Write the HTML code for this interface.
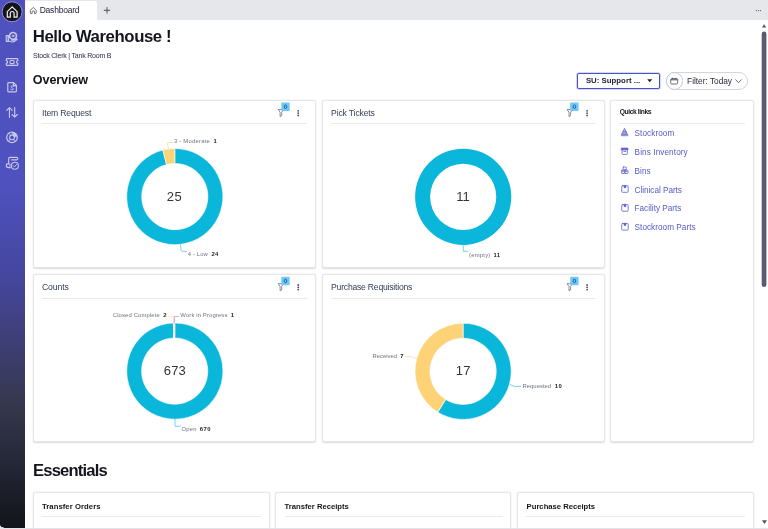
<!DOCTYPE html>
<html>
<head>
<meta charset="utf-8">
<title>Dashboard</title>
<style>
*{box-sizing:border-box;margin:0;padding:0}
html,body{width:768px;height:529px;overflow:hidden;background:#fff}
body{font-family:"Liberation Sans",sans-serif;color:#1c1c2b;position:relative;filter:blur(0.3px)}
.abs{position:absolute}
.t{position:absolute;white-space:nowrap;line-height:1}
#side{left:-4px;top:-4px;width:28.5px;height:531.6px;background:linear-gradient(180deg,#4e51be 0%,#4e51be 36.5%,#45469c 53.3%,#3e3f78 64.3%,#36384f 76.2%,#242735 88.1%,#12141b 100%)}
#tabs{left:24.5px;top:-4px;width:748px;height:23.8px;background:#e6e7ea}
#tab{left:25px;top:1px;width:72px;height:19px;background:#fff;border-radius:2px 2px 0 0}
#bottom{left:-4px;top:527.6px;width:776px;height:6px;background:#e3e4e8}
.card{position:absolute;background:#fff;border:1px solid #e4e6ea;border-radius:2.5px;box-shadow:0 0.5px 1.5px rgba(40,40,60,.16)}
.hr{position:absolute;height:1px;background:#e8eaee}
</style>
</head>
<body>
<div id="side" class="abs"></div>
<div id="tabs" class="abs"></div>
<div id="tab" class="abs"></div>

<!-- cards -->
<div class="card" style="left:33px;top:99.6px;width:283px;height:168.8px"></div>
<div class="card" style="left:321.5px;top:99.6px;width:283px;height:168.8px"></div>
<div class="card" style="left:33px;top:274px;width:283px;height:168.3px"></div>
<div class="card" style="left:321.5px;top:274px;width:283px;height:168.3px"></div>
<div class="card" style="left:610.3px;top:99.6px;width:143.5px;height:342px"></div>
<div class="card" style="left:33px;top:492px;width:236.5px;height:50px"></div>
<div class="card" style="left:275px;top:492px;width:236.4px;height:50px"></div>
<div class="card" style="left:517px;top:492px;width:236.7px;height:50px"></div>

<!-- dividers -->
<div class="hr" style="left:42px;top:123.2px;width:264.5px"></div>
<div class="hr" style="left:331px;top:123.2px;width:264.5px"></div>
<div class="hr" style="left:42px;top:297.7px;width:264.5px"></div>
<div class="hr" style="left:331px;top:297.7px;width:264.5px"></div>
<div class="hr" style="left:619.3px;top:122.8px;width:125.5px"></div>
<div class="hr" style="left:42px;top:515.6px;width:218.5px"></div>
<div class="hr" style="left:284.5px;top:515.6px;width:218px"></div>
<div class="hr" style="left:526.3px;top:515.6px;width:218.5px"></div>

<!-- select + filter pill -->
<div class="abs" style="left:577px;top:72.6px;width:83.3px;height:16.4px;border:1.25px solid #4653cb;border-radius:2px;background:#fff;box-shadow:0 0 0 0.8px rgba(80,92,210,.32)"></div>
<div class="abs" style="left:665.8px;top:72.1px;width:81.8px;height:17.6px;border:0.8px solid #d3d6df;border-radius:9px;background:#fff"></div>
<div class="abs" style="left:665.8px;top:72.1px;width:17.6px;height:17.6px;border:0.8px solid #c2c6d8;border-radius:9px;background:#fff"></div>

<svg class="abs" style="left:0;top:0" width="768" height="529" viewBox="0 0 768 529">
<path fill="#0bb6db" stroke="#fff" stroke-width="0.6" stroke-linejoin="round" d="M174.80,148.50A48.1,48.1 0 1,1 162.84,150.01L166.57,164.54A33.1,33.1 0 1,0 174.80,163.50Z"/>
<path fill="#fed377" stroke="#fff" stroke-width="0.6" stroke-linejoin="round" d="M162.84,150.01A48.1,48.1 0 0,1 174.80,148.50L174.80,163.50A33.1,33.1 0 0,0 166.57,164.54Z"/>
<path d="M168.8,149.3L167.3,143.6Q167.1,142.5 168.2,142.5L172.9,142.5" fill="none" stroke="#fddf9f" stroke-width="0.85" stroke-linejoin="round"/>
<path d="M180.4,244.4L181.2,250.4Q181.3,251.3 182.2,251.3L186.8,251.3" fill="none" stroke="#5fcbe6" stroke-width="0.85" stroke-linejoin="round"/>
<path fill="#0bb6db" fill-rule="evenodd" d="M415.09999999999997,196.8a48.1,48.1 0 1,0 96.2,0a48.1,48.1 0 1,0 -96.2,0ZM430.09999999999997,196.8a33.1,33.1 0 1,0 66.2,0a33.1,33.1 0 1,0 -66.2,0Z"/>
<path d="M463.3,244.6L463.3,251.3L468.4,251.3" fill="none" stroke="#5fcbe6" stroke-width="0.85" stroke-linejoin="round"/>
<path fill="#0bb6db" stroke="#fff" stroke-width="0.6" stroke-linejoin="round" d="M174.80,323.00A48.1,48.1 0 1,1 173.45,323.02L173.87,338.01A33.1,33.1 0 1,0 174.80,338.00Z"/>
<path fill="#fed377" stroke="#fff" stroke-width="0.6" stroke-linejoin="round" d="M173.45,323.02A48.1,48.1 0 0,1 174.35,323.00L174.49,338.00A33.1,33.1 0 0,0 173.87,338.01Z"/>
<path fill="#d78bd2" stroke="#fff" stroke-width="0.6" stroke-linejoin="round" d="M174.35,323.00A48.1,48.1 0 0,1 174.80,323.00L174.80,338.00A33.1,33.1 0 0,0 174.49,338.00Z"/>
<rect x="173.25" y="322.5" width="1.35" height="16.5" fill="#fff"/>
<path d="M173.6,323.6L173.6,316.8L168,316.8" fill="none" stroke="#fde2ae" stroke-width="0.85" stroke-linejoin="round"/>
<path d="M174.4,323.6L174.4,316.5L179.2,316.5" fill="none" stroke="#d995d6" stroke-width="0.85" stroke-linejoin="round"/>
<path d="M175,419L175,426.2L180.8,426.2" fill="none" stroke="#5fcbe6" stroke-width="0.85" stroke-linejoin="round"/>
<path fill="#0bb6db" stroke="#fff" stroke-width="0.6" stroke-linejoin="round" d="M463.10,323.20A48.1,48.1 0 1,1 437.78,412.20L445.68,399.44A33.1,33.1 0 1,0 463.10,338.20Z"/>
<path fill="#fed377" stroke="#fff" stroke-width="0.6" stroke-linejoin="round" d="M437.78,412.20A48.1,48.1 0 0,1 463.10,323.20L463.10,338.20A33.1,33.1 0 0,0 445.68,399.44Z"/>
<path d="M417.2,358.6L410.3,356.4L405.1,356.4" fill="none" stroke="#fde2ae" stroke-width="0.85" stroke-linejoin="round"/>
<path d="M509.9,384.5L514.5,386.4L521,386.4" fill="none" stroke="#5fcbe6" stroke-width="0.85" stroke-linejoin="round"/>
<!-- sidebar: home -->
<circle cx="12.1" cy="11.8" r="10" fill="#14141d" stroke="#9c9cd2" stroke-width="0.9"/>
<path d="M7.3,11.6L12.2,6.9L17.1,11.6V17.2H14.1V13.4a1.9,1.9 0 0 0 -3.8,0V17.2H7.3Z" fill="none" stroke="#f1f1f6" stroke-width="1.2" stroke-linejoin="round"/>
<g fill="none" stroke="#c6c7eb" stroke-width="1.05" stroke-linecap="round" stroke-linejoin="round">
<!-- hand + gear -->
<rect x="6.2" y="35.6" width="2.4" height="5.8" rx="0.4" fill="#c6c7eb" fill-opacity="0.45"/>
<circle cx="13" cy="35.9" r="3.45" stroke-dasharray="1.75 0.5" stroke-width="1.6"/>
<circle cx="13" cy="35.9" r="0.9" stroke-width="0.9"/>
<path d="M8.8,41.2L12.2,42Q14.6,42.1 17.2,39.4Q16.4,38.4 15.2,39.2L13.6,40.2H11.6" stroke-width="1.1"/>
<!-- ticket -->
<path d="M7,58.6H17.1Q17.8,58.6 17.8,59.3V60.6Q16.5,61 16.5,62Q16.5,63 17.8,63.4V64.7Q17.8,65.4 17.1,65.4H7Q6.3,65.4 6.3,64.7V63.4Q7.6,63 7.6,62Q7.6,61 6.3,60.6V59.3Q6.3,58.6 7,58.6Z" stroke-width="1.2"/>
<rect x="10" y="60.4" width="4.2" height="3.2" rx="1"/>
<!-- doc $ -->
<path d="M8.6,82.6H13.6L16.4,85.4V91Q16.4,91.8 15.6,91.8H8.6Q7.8,91.8 7.8,91V83.4Q7.8,82.6 8.6,82.6ZM13.4,82.8V85.6H16.2" stroke-width="1.2"/>
<path d="M13.4,86.2Q12.1,85.5 11.2,86.2Q10.5,87 11.6,87.6L12.8,88.1Q13.8,88.8 13,89.6Q12,90.3 10.7,89.5" stroke-width="0.95"/>
<!-- arrows -->
<path d="M9.45,117.3V108M6.7,110.4L9.45,107.7L12.2,110.4M14.7,107.6V116.9M12.1,114.5L14.7,117.1L17.4,114.5" stroke-width="1.15"/>
<!-- donut icon -->
<circle cx="12" cy="137.4" r="5.3" stroke-width="1.2"/>
<circle cx="12" cy="137.4" r="2.4" stroke-width="1.1"/>
<path d="M12.6,132.3A5.2,5.2 0 0 1 17.1,136.4L14.3,137A2.4,2.4 0 0 0 12.4,135Z" fill="#c6c7eb" stroke-width="0.4"/>
<path d="M10.2,139.2L8.4,141.2M13.6,139.4L15.2,141.5M10.6,135.4L9,133.2" stroke-width="0.8"/>
<!-- scroll + check -->
<path d="M8.7,164V158.6Q8.7,157.4 9.9,157.4H16.6Q17.8,157.4 17.8,158.6Q17.8,159.8 16.6,159.8H11.6" stroke-width="1.15"/>
<path d="M8.7,163.6Q6.3,163.4 6.3,165.6Q6.3,167.6 8.6,167.6H10.2" stroke-width="1.15"/>
<path d="M9.9,164V167.4" stroke-width="0.9"/>
<circle cx="14.85" cy="165.7" r="3.5" stroke-width="1.1"/>
<path d="M13.3,165.8L14.4,166.9L16.5,164.6" stroke-width="0.95"/>
</g>
<!-- tab home icon -->
<path d="M30.4,10.3L33.3,7.4L36.2,10.3V12.9Q36.2,13.6 35.5,13.6H34.5V12a1.2,1.2 0 0 0 -2.4,0V13.6H31.1Q30.4,13.6 30.4,12.9Z" fill="none" stroke="#4f4f60" stroke-width="0.8" stroke-linejoin="round"/>
<!-- plus -->
<path d="M103.8,10.3H110.2M107,7.1V13.5" stroke="#3a3a48" stroke-width="0.85" fill="none"/>
<!-- ellipsis top right -->
<g fill="#55556a"><circle cx="756.3" cy="10.6" r="0.6"/><circle cx="758.4" cy="10.6" r="0.6"/><circle cx="760.5" cy="10.6" r="0.6"/></g>
<!-- scrollbar -->
<rect x="761.7" y="31.6" width="4.7" height="255.4" rx="2.35" fill="#5c5a70"/>
<path d="M761.9,27.6L764.1,24.2L766.3,27.6Z" fill="#55536a"/>
<path d="M761.9,520.2L767,520.2L764.45,524Z" fill="#55536a"/>
<!-- calendar -->
<rect x="670.7" y="78.6" width="7" height="5.4" rx="1.1" fill="none" stroke="#484858" stroke-width="0.8"/>
<path d="M670.9,79.8H677.5" stroke="#484858" stroke-width="1" fill="none"/>
<path d="M672.5,77.8V79M675.9,77.8V79" stroke="#3d3d4d" stroke-width="0.8" fill="none"/>
<path d="M647.2,79.2H652.2L649.7,82.3Z" fill="#1c1c2b"/>
<!-- chevron -->
<path d="M735.4,79.5L738.5,82.6L741.6,79.5" fill="none" stroke="#44444f" stroke-width="0.8"/>
<g transform="translate(0,0)"><path d="M278.2,109.5H283.5L281.7,112.3V115.7L280.1,116.6V112.3Z" fill="none" stroke="#5a5f6e" stroke-width="0.7" stroke-linejoin="round"/><rect x="281.3" y="102.5" width="8.4" height="8.5" rx="1" fill="#70c7fa"/><ellipse cx="285.5" cy="106.7" rx="1.3" ry="1.75" fill="none" stroke="#1d4f86" stroke-width="0.85"/><circle cx="298.2" cy="110.8" r="0.9" fill="#474b5b"/><circle cx="298.2" cy="113.1" r="0.9" fill="#474b5b"/><circle cx="298.2" cy="115.4" r="0.9" fill="#474b5b"/></g>
<g transform="translate(288.9,0)"><path d="M278.2,109.5H283.5L281.7,112.3V115.7L280.1,116.6V112.3Z" fill="none" stroke="#5a5f6e" stroke-width="0.7" stroke-linejoin="round"/><rect x="281.3" y="102.5" width="8.4" height="8.5" rx="1" fill="#70c7fa"/><ellipse cx="285.5" cy="106.7" rx="1.3" ry="1.75" fill="none" stroke="#1d4f86" stroke-width="0.85"/><circle cx="298.2" cy="110.8" r="0.9" fill="#474b5b"/><circle cx="298.2" cy="113.1" r="0.9" fill="#474b5b"/><circle cx="298.2" cy="115.4" r="0.9" fill="#474b5b"/></g>
<g transform="translate(0,174.2)"><path d="M278.2,109.5H283.5L281.7,112.3V115.7L280.1,116.6V112.3Z" fill="none" stroke="#5a5f6e" stroke-width="0.7" stroke-linejoin="round"/><rect x="281.3" y="102.5" width="8.4" height="8.5" rx="1" fill="#70c7fa"/><ellipse cx="285.5" cy="106.7" rx="1.3" ry="1.75" fill="none" stroke="#1d4f86" stroke-width="0.85"/><circle cx="298.2" cy="110.8" r="0.9" fill="#474b5b"/><circle cx="298.2" cy="113.1" r="0.9" fill="#474b5b"/><circle cx="298.2" cy="115.4" r="0.9" fill="#474b5b"/></g>
<g transform="translate(288.9,174.2)"><path d="M278.2,109.5H283.5L281.7,112.3V115.7L280.1,116.6V112.3Z" fill="none" stroke="#5a5f6e" stroke-width="0.7" stroke-linejoin="round"/><rect x="281.3" y="102.5" width="8.4" height="8.5" rx="1" fill="#70c7fa"/><ellipse cx="285.5" cy="106.7" rx="1.3" ry="1.75" fill="none" stroke="#1d4f86" stroke-width="0.85"/><circle cx="298.2" cy="110.8" r="0.9" fill="#474b5b"/><circle cx="298.2" cy="113.1" r="0.9" fill="#474b5b"/><circle cx="298.2" cy="115.4" r="0.9" fill="#474b5b"/></g>
<g fill="none" stroke="#5b60c9" stroke-width="0.8" stroke-linejoin="round" stroke-linecap="round">
<path d="M624.65,128.7L627.6,134.6H621.7Z" fill="#5b60c9" fill-opacity="0.4"/><path d="M621.3,135.7H628"/><path d="M623.4,131.6H625.9M622.7,133.1H626.6" stroke-width="0.7"/>
<path d="M621.6,148.1H627.9V149.9H621.6Z" fill="#5b60c9"/><path d="M622.1,150V153.6Q622.1,154.4 622.9,154.4H626.6Q627.4,154.4 627.4,153.6V150"/><path d="M623.8,151.5H625.7"/>
<rect x="623.2" y="167" width="3.1" height="2.8" rx="0.4"/><rect x="621.6" y="170.2" width="3.2" height="3.3" rx="0.4"/><rect x="624.8" y="170.2" width="3.2" height="3.3" rx="0.4"/><path d="M622.6,171.6H623.8M625.8,171.6H627"/>
<rect x="621.7" y="185.7" width="6.5" height="6.6" rx="1"/><path d="M623.95,185.7V187.79999999999998H625.95V185.7Z" fill="#5b60c9" stroke-width="0.4"/>
<rect x="621.7" y="204.6" width="6.5" height="6.6" rx="1"/><path d="M623.95,204.6V206.7H625.95V204.6Z" fill="#5b60c9" stroke-width="0.4"/>
<rect x="621.7" y="223.5" width="6.5" height="6.6" rx="1"/><path d="M623.95,223.5V225.6H625.95V223.5Z" fill="#5b60c9" stroke-width="0.4"/>
</g>

</svg>

<div class="t" style="left:39.68px;top:5.00px;font-size:8.5px;line-height:10px;color:#23233a;letter-spacing:-0.214px">Dashboard</div>
<div class="t" style="left:32.76px;top:27.00px;font-size:16.8px;line-height:19px;font-weight:bold;color:#15151f;letter-spacing:-0.433px">Hello Warehouse !</div>
<div class="t" style="left:33.05px;top:52.00px;font-size:7.0px;line-height:7px;color:#2a2a3a;letter-spacing:-0.206px">Stock Clerk | Tank Room B</div>
<div class="t" style="left:32.87px;top:73.00px;font-size:12.6px;line-height:14px;font-weight:bold;color:#15151f;letter-spacing:-0.110px">Overview</div>
<div class="t" style="left:32.97px;top:461.00px;font-size:16.6px;line-height:19px;font-weight:bold;color:#15151f;letter-spacing:-0.810px">Essentials</div>
<div class="t" style="left:41.97px;top:108.00px;font-size:8.6px;line-height:10px;color:#343b56;letter-spacing:-0.153px">Item Request</div>
<div class="t" style="left:331.07px;top:108.00px;font-size:8.6px;line-height:10px;color:#343b56;letter-spacing:-0.142px">Pick Tickets</div>
<div class="t" style="left:41.97px;top:282.00px;font-size:8.6px;line-height:10px;color:#343b56;letter-spacing:-0.077px">Counts</div>
<div class="t" style="left:331.07px;top:282.00px;font-size:8.6px;line-height:10px;color:#343b56;letter-spacing:-0.212px">Purchase Requisitions</div>
<div class="t" style="left:619.66px;top:108.00px;font-size:6.7px;line-height:7px;font-weight:bold;color:#15151f;letter-spacing:-0.380px">Quick links</div>
<div class="t" style="left:41.91px;top:502.00px;font-size:7.7px;line-height:9px;font-weight:bold;color:#15151f;letter-spacing:0.064px">Transfer Orders</div>
<div class="t" style="left:284.62px;top:502.00px;font-size:7.7px;line-height:9px;font-weight:bold;color:#15151f;letter-spacing:-0.020px">Transfer Receipts</div>
<div class="t" style="left:526.62px;top:502.00px;font-size:7.7px;line-height:9px;font-weight:bold;color:#15151f;letter-spacing:-0.018px">Purchase Receipts</div>
<div class="t" style="left:585.91px;top:76.00px;font-size:7.8px;line-height:9px;font-weight:bold;color:#23233a;letter-spacing:0.017px">SU: Support ...</div>
<div class="t" style="left:687.09px;top:76.00px;font-size:8.3px;line-height:10px;color:#2a2a3a;letter-spacing:-0.008px">Filter: Today</div>
<div class="t" style="left:634.59px;top:129.00px;font-size:8.2px;line-height:9px;color:#555bc8;letter-spacing:0.077px">Stockroom</div>
<div class="t" style="left:634.59px;top:148.00px;font-size:8.2px;line-height:9px;color:#555bc8;letter-spacing:0.096px">Bins Inventory</div>
<div class="t" style="left:634.59px;top:167.00px;font-size:8.2px;line-height:9px;color:#555bc8;letter-spacing:0.025px">Bins</div>
<div class="t" style="left:634.59px;top:186.00px;font-size:8.2px;line-height:9px;color:#555bc8;letter-spacing:-0.032px">Clinical Parts</div>
<div class="t" style="left:634.59px;top:204.00px;font-size:8.2px;line-height:9px;color:#555bc8;letter-spacing:-0.009px">Facility Parts</div>
<div class="t" style="left:634.59px;top:223.00px;font-size:8.2px;line-height:9px;color:#555bc8;letter-spacing:0.035px">Stockroom Parts</div>
<div class="t" style="left:166.75px;top:189.00px;font-size:13px;line-height:15px;color:#33343f;letter-spacing:0.551px">25</div>
<div class="t" style="left:456.15px;top:189.00px;font-size:13px;line-height:15px;color:#33343f;letter-spacing:0.135px">11</div>
<div class="t" style="left:163.65px;top:363.00px;font-size:13px;line-height:15px;color:#33343f;letter-spacing:0.256px">673</div>
<div class="t" style="left:455.85px;top:363.00px;font-size:13px;line-height:15px;color:#33343f;letter-spacing:0.101px">17</div>
<div class="t" style="left:173.91px;top:138.00px;font-size:5.9px;line-height:6px;color:#6e7381;letter-spacing:0.235px">3 - Moderate</div>
<div class="t" style="left:213.41px;top:138.00px;font-size:5.9px;line-height:6px;font-weight:bold;color:#22232e;letter-spacing:0.000px">1</div>
<div class="t" style="left:187.71px;top:251.00px;font-size:5.9px;line-height:6px;color:#6e7381;letter-spacing:0.143px">4 - Low</div>
<div class="t" style="left:211.41px;top:251.00px;font-size:5.9px;line-height:6px;font-weight:bold;color:#22232e;letter-spacing:0.384px">24</div>
<div class="t" style="left:469.10px;top:252.00px;font-size:5.9px;line-height:6px;color:#6e7381;letter-spacing:0.195px">(empty)</div>
<div class="t" style="left:493.45px;top:252.00px;font-size:5.9px;line-height:6px;font-weight:bold;color:#22232e;letter-spacing:0.273px">11</div>
<div class="t" style="left:112.80px;top:312.00px;font-size:5.9px;line-height:6px;color:#6e7381;letter-spacing:0.130px">Closed Complete</div>
<div class="t" style="left:163.31px;top:312.00px;font-size:5.9px;line-height:6px;font-weight:bold;color:#22232e;letter-spacing:0.000px">2</div>
<div class="t" style="left:180.31px;top:312.00px;font-size:5.9px;line-height:6px;color:#6e7381;letter-spacing:0.135px">Work in Progress</div>
<div class="t" style="left:230.81px;top:312.00px;font-size:5.9px;line-height:6px;font-weight:bold;color:#22232e;letter-spacing:0.000px">1</div>
<div class="t" style="left:181.51px;top:426.00px;font-size:5.9px;line-height:6px;color:#6e7381;letter-spacing:0.177px">Open</div>
<div class="t" style="left:199.71px;top:426.00px;font-size:5.9px;line-height:6px;font-weight:bold;color:#22232e;letter-spacing:0.529px">670</div>
<div class="t" style="left:372.50px;top:353.00px;font-size:5.9px;line-height:6px;color:#6e7381;letter-spacing:-0.004px">Received</div>
<div class="t" style="left:400.31px;top:353.00px;font-size:5.9px;line-height:6px;font-weight:bold;color:#22232e;letter-spacing:0.000px">7</div>
<div class="t" style="left:522.50px;top:383.00px;font-size:5.9px;line-height:6px;color:#6e7381;letter-spacing:0.015px">Requested</div>
<div class="t" style="left:554.81px;top:383.00px;font-size:5.9px;line-height:6px;font-weight:bold;color:#22232e;letter-spacing:0.384px">10</div>
<div id="bottom" class="abs"></div>
<div class="abs" style="left:-1px;top:524.1px;width:4.5px;height:3.5px;background:radial-gradient(circle at 4.5px 0px,rgba(227,228,232,0) 3.2px,#e3e4e8 3.7px)"></div>
</body>
</html>
